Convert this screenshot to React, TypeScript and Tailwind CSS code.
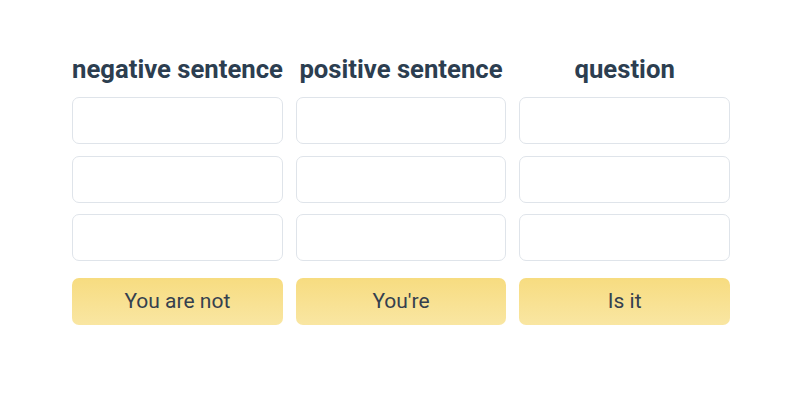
import React from "react";

const cols = [
  { title: "negative sentence", btn: "You are not" },
  { title: "positive sentence", btn: "You're" },
  { title: "question", btn: "Is it" },
];

export default function App() {
  return (
    <div className="w-[800px] h-[400px] bg-white" style={{ fontFamily: "Roboto, 'Noto Sans', sans-serif" }}>
      <div className="pt-[55px] pl-[72px] pr-[70px] grid grid-cols-3 gap-x-[13px]">
        {cols.map((c) => (
          <div key={c.title} className="flex flex-col">
            <div className="h-[28px] leading-[28px] text-center text-[25.7px] font-bold text-[#2c3e50] whitespace-nowrap">
              {c.title}
            </div>
            <div className="mt-[14px] flex flex-col gap-[11.5px]">
              {[0, 1, 2].map((i) => (
                <div key={i} className="h-[47px] rounded-[7px] border border-[#dfe4ea] bg-white" />
              ))}
              <div className="mt-[5.5px] h-[47px] rounded-[7px] bg-gradient-to-b from-[#f7dc80] to-[#f9e6a2] flex items-center justify-center text-[21px] text-[#34404e]">
                {c.btn}
              </div>
            </div>
          </div>
        ))}
      </div>
    </div>
  );
}
